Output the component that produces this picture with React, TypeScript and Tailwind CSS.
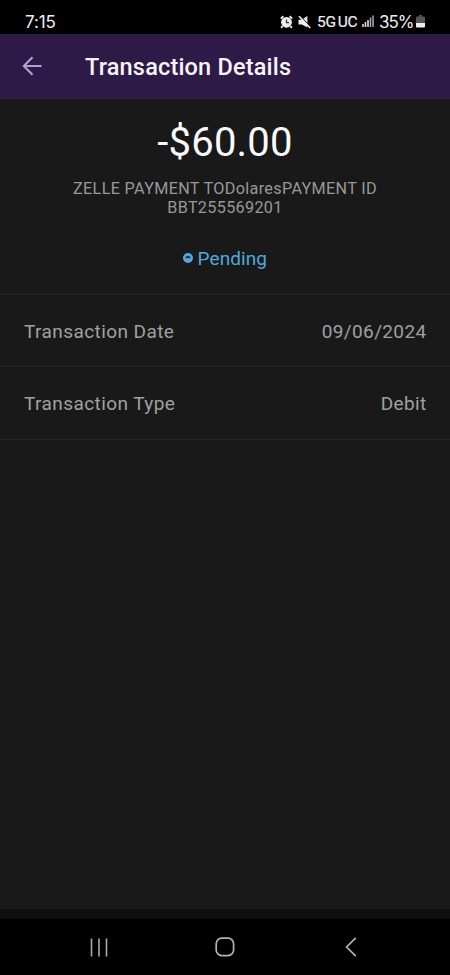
const rows = [
  { label: 'Transaction Date', value: '09/06/2024' },
  { label: 'Transaction Type', value: 'Debit' },
];

function StatusBar() {
  return (
    <div className="flex h-[34px] shrink-0 items-start bg-black pr-[25px] pl-[25px] pt-[11px] text-[#eeeeee]">
      <span className="pt-px text-[17px] leading-[21px] font-['Inter','Roboto',sans-serif] tracking-[-0.1px]">7:15</span>
      <div className="ml-auto flex h-[21px] items-center">
        <svg width="13" height="14" viewBox="0 0 13 14" className="mr-[5px]">
          <circle cx="6.5" cy="7.3" r="5.4" fill="#eee" />
          <path d="M.8 3.6 3.4 1.2M12.2 3.6 9.6 1.2M2.5 11.2 1.2 12.8M10.5 11.2l1.3 1.6" stroke="#eee" strokeWidth="1.9" />
          <path d="M6.5 4.4v3.2H9" fill="none" stroke="#333" strokeWidth="1.2" />
        </svg>
        <svg width="13" height="14" viewBox="0 0 13 14" className="mr-[6px]">
          <path d="M.5 4.7h3L9.4 1v11.4L3.8 9.4H.5Z" fill="#eee" />
          <path d="M2 .6 13 12.2" stroke="#000" strokeWidth="1" />
          <path d="M1 1.2 12.3 13" stroke="#eee" strokeWidth="1.6" />
        </svg>
        <span className="w-[41px] pt-px text-[15.5px] leading-[21px] whitespace-nowrap font-['Roboto',sans-serif] tracking-[-0.3px] [-webkit-text-stroke:0.2px_#eee]">5G<span className="ml-[2px]">UC</span></span>
        <svg width="12" height="13" viewBox="0 0 12 13" className="ml-[4px]">
          <path d="M1 9v3M3.5 7v5M6 5v7" stroke="#ddd" strokeWidth="1.6" />
          <path d="M8.5 2.5V12M11 .5V12" stroke="#aaa" strokeWidth="1.5" />
        </svg>
        <span className="ml-[5px] w-[35px] pt-px text-[17px] leading-[21px] whitespace-nowrap font-['Inter','Roboto',sans-serif] tracking-[-1px]">35%</span>
        <svg width="9" height="13" viewBox="0 0 9 13" className="ml-[2px]">
          <path d="M3 0h3v1.4h2q1 0 1 1V8H0V2.4q0-1 1-1h2Z" fill="#555" />
          <path d="M0 8h9v3.5q0 1-1 1H1q-1 0-1-1Z" fill="#eee" />
        </svg>
      </div>
    </div>
  );
}

function Header() {
  return (
    <header className="flex h-[64.5px] shrink-0 items-center bg-[#2e1a47] pl-[22px]">
      <svg width="21" height="20" viewBox="0 0 21 20" fill="none" stroke="#b5a2d5" strokeWidth="2">
        <path d="M19.5 10H2M10.5 1.2 1.8 10l8.7 8.8" />
      </svg>
      <h1 className="ml-[42px] pt-[2px] text-[23.5px] leading-[28px] font-medium tracking-[0.18px] text-[#f7f4fa]">Transaction Details</h1>
    </header>
  );
}

function Summary() {
  return (
    <section className="flex h-[195px] shrink-0 flex-col items-center pt-[21.5px] text-center">
      <p className="text-[40px] leading-[46px] tracking-[0.2px] text-[#fafafa]">-$60.00</p>
      <p className="mt-[12.5px] text-[16.2px] leading-[19px] tracking-[0.33px] text-[#989898]">
        ZELLE PAYMENT TODolaresPAYMENT ID
        <br />
        BBT255569201
      </p>
      <div className="mt-[30px] flex items-center text-[#51a9da]">
        <svg width="10" height="10" viewBox="0 0 10 10" className="mb-[2px] mr-[4.5px]">
          <circle cx="5" cy="5" r="5" fill="#51a9da" />
          <path d="M2.4 5.2a2.6 2.5 0 0 1 5.2 0Z" fill="#24333c" />
        </svg>
        <span className="text-[19px] leading-[24px] tracking-[0.05px]">Pending</span>
      </div>
    </section>
  );
}

function NavigationBar() {
  return (
    <nav className="flex h-[56px] shrink-0 items-center justify-between bg-black pr-[93px] pl-[90px]">
      <svg width="18" height="19" viewBox="0 0 18 19" stroke="#aaa" strokeWidth="1.6">
        <path d="M1.5 .5v18M9 .5v18M16.5 .5v18" />
      </svg>
      <svg width="20" height="20" viewBox="0 0 20 20" fill="none" stroke="#b4b4b4" strokeWidth="1.7" className="mr-[4px]">
        <rect x="1.2" y="1.2" width="17.4" height="17.4" rx="5.6" />
      </svg>
      <svg width="12" height="20" viewBox="0 0 12 20" fill="none" stroke="#b4b4b4" strokeWidth="1.7">
        <path d="M10.8 .9 1.6 10l9.2 9.1" />
      </svg>
    </nav>
  );
}

export default function App() {
  return (
    <div className="flex h-[975px] w-[450px] flex-col overflow-hidden bg-[#191919] font-['Roboto',sans-serif]">
      <StatusBar />
      <Header />
      <Summary />
      <dl className="flex flex-1 flex-col border-t border-[#252525] text-[19px] leading-[24px] tracking-[0.42px] text-[#a0a0a0]">
        {rows.map((row) => (
          <div key={row.label} className="flex h-[72.5px] items-center justify-between border-b border-[#252525] pt-[3px] pr-[23.5px] pl-6">
            <dt>{row.label}</dt>
            <dd className="tracking-[0.36px]">{row.value}</dd>
          </div>
        ))}
      </dl>
      <div className="h-[10px] shrink-0 bg-[#0e0e0e]" />
      <NavigationBar />
    </div>
  );
}
